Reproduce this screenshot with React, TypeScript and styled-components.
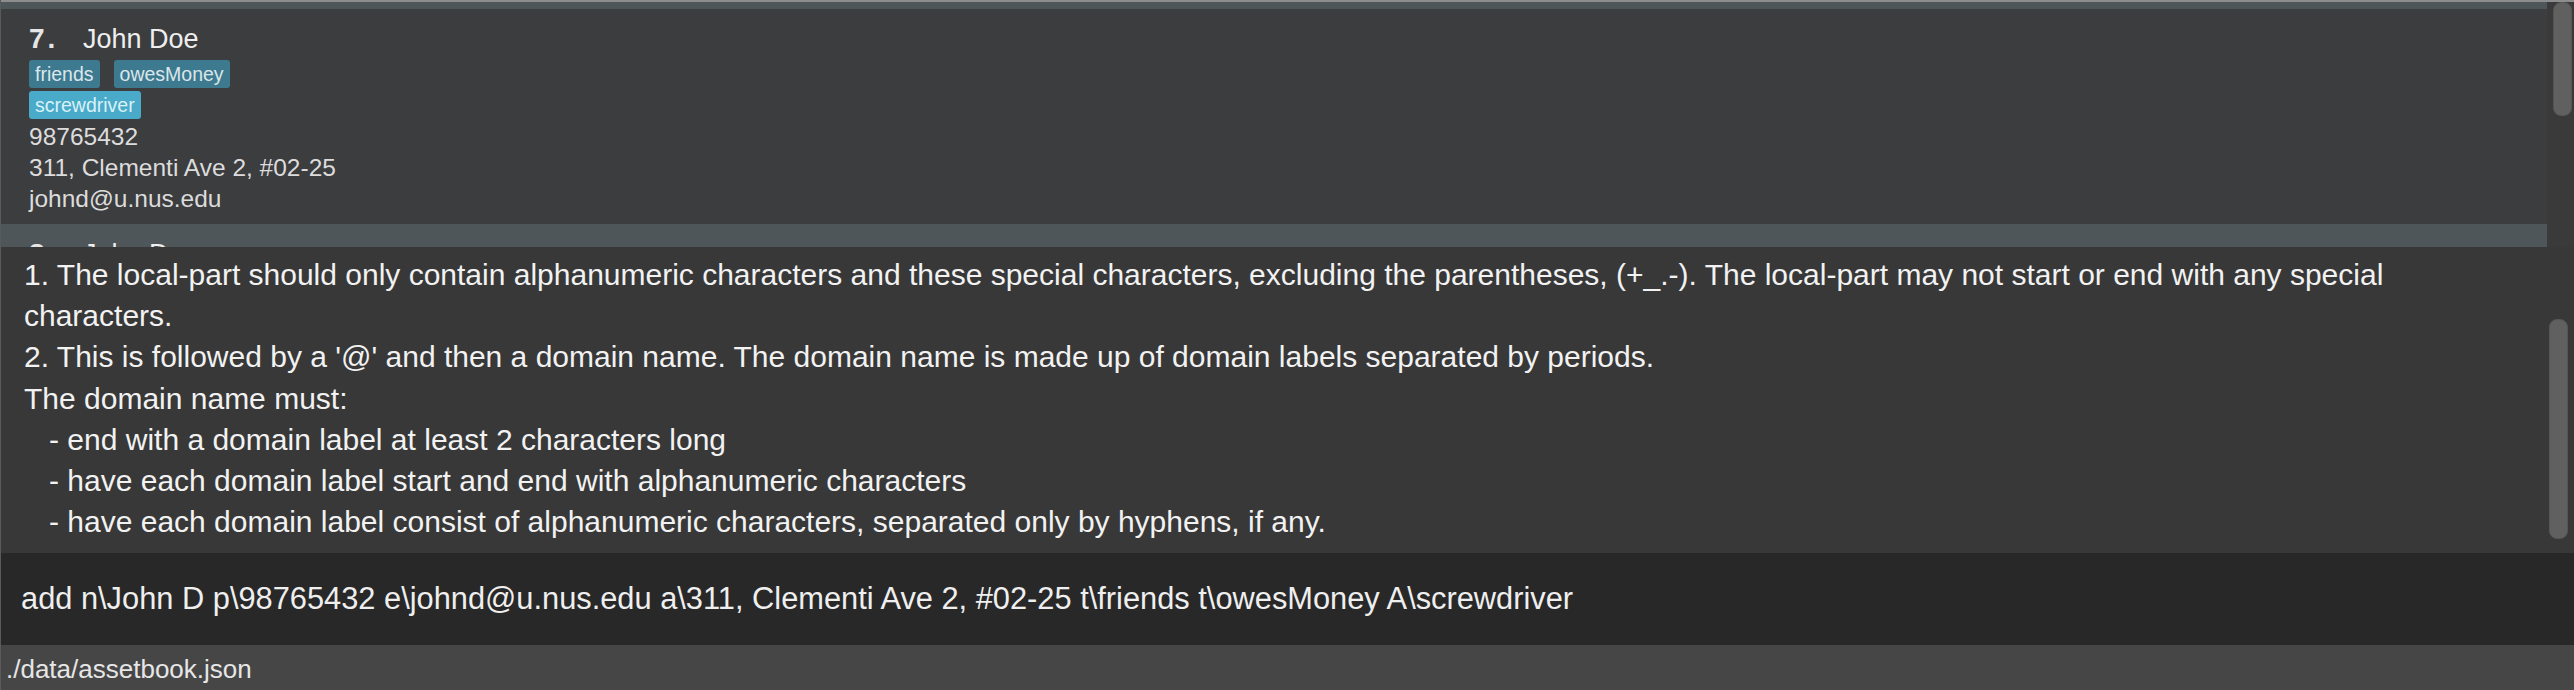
import React, { useLayoutEffect, useRef } from 'react';
import styled, { createGlobalStyle } from 'styled-components';

const GlobalStyle = createGlobalStyle`
  html, body {
    margin: 0;
    padding: 0;
    background: #383838;
  }
  body {
    font-family: "Liberation Sans", Arial, sans-serif;
  }
`;

const Window = styled.div`
  display: flex;
  flex-direction: column;
  width: 100%;
  height: 690px;
  border-left: 1px solid #5a5a5a;
  box-sizing: border-box;
  overflow: hidden;
`;

const ListPanel = styled.div`
  display: flex;
  height: 247px;
  border-top: 2px solid #8d8d8d;
  background: #3a3a3a;
  box-sizing: border-box;
`;

const ListViewport = styled.div`
  flex: 1;
  overflow: hidden;
`;

const Card = styled.div<{ odd: boolean }>`
  padding: 14px 0 10px 28px;
  background: ${p => (p.odd ? '#3c3d3f' : '#4f5659')};
  color: #dedede;
`;

const NameLine = styled.div`
  display: flex;
  align-items: baseline;
  font-size: 27px;
  line-height: 32px;
  color: #eeeeee;
`;

const Index = styled.span`
  display: inline-block;
  width: 54px;
  font-size: 28px;
  font-weight: 700;
  letter-spacing: 3px;
  color: #e6e6e6;
`;

const Tags = styled.div`
  display: flex;
  flex-wrap: wrap;
  max-width: 260px;
  column-gap: 14px;
  row-gap: 3px;
  margin-top: 5px;
  margin-bottom: 2px;
`;

const Tag = styled.span<{ bright?: boolean }>`
  display: inline-block;
  height: 28px;
  line-height: 28px;
  padding: 0 6px;
  border-radius: 3px;
  font-size: 19.5px;
  background: ${p => (p.bright ? '#4aaac9' : '#3d7a90')};
  color: ${p => (p.bright ? '#d9f1f8' : '#dbe6ea')};
`;

const Detail = styled.div`
  font-size: 24.5px;
  line-height: 31px;
  color: #dcdcdc;
`;

const ScrollTrack = styled.div<{ width: number; pad: number }>`
  width: ${p => p.width}px;
  padding: 0 ${p => p.pad}px;
  box-sizing: border-box;
  display: flex;
  justify-content: flex-end;
`;

const Thumb = styled.div<{ top: number; length: number }>`
  width: 19px;
  height: ${p => p.length}px;
  margin-top: ${p => p.top}px;
  border-radius: 8px;
  background: #606060;
  border: 1px solid #555;
  box-sizing: border-box;
`;

const ResultPanel = styled.div`
  display: flex;
  height: 306px;
  background: #383838;
`;

const ResultText = styled.div`
  flex: 1;
  padding: 7px 0 0 23px;
  font-size: 30px;
  line-height: 41.2px;
  color: #f2f2f2;
  white-space: pre;
  overflow: hidden;
`;

const CommandBox = styled.div`
  display: flex;
  align-items: center;
  height: 92px;
  padding-left: 20px;
  background: #282828;
  font-size: 30.8px;
  color: #efefef;
  white-space: pre;
`;

const StatusBar = styled.div`
  display: flex;
  align-items: center;
  flex: 1;
  padding-left: 5px;
  padding-top: 4px;
  background: #464646;
  font-size: 26px;
  color: #e6e6e6;
`;

type Person = {
  name: string;
  tags: { label: string; bright?: boolean }[];
  phone: string;
  address: string;
  email: string;
};

const people: Person[] = [
  {
    name: 'Bernice Yu',
    tags: [{ label: 'colleagues' }, { label: 'friends' }],
    phone: '99272758',
    address: 'Blk 30 Lorong 3 Serangoon Gardens, #07-18',
    email: 'berniceyu@example.com',
  },
  {
    name: 'John Doe',
    tags: [{ label: 'friends' }, { label: 'owesMoney' }, { label: 'screwdriver', bright: true }],
    phone: '98765432',
    address: '311, Clementi Ave 2, #02-25',
    email: 'johnd@u.nus.edu',
  },
  {
    name: 'John D',
    tags: [{ label: 'friends' }, { label: 'owesMoney' }, { label: 'screwdriver', bright: true }],
    phone: '98765432',
    address: '311, Clementi Ave 2, #02-25',
    email: 'johnd@u.nus.edu',
  },
];

const resultLines = [
  '1. The local-part should only contain alphanumeric characters and these special characters, excluding the parentheses, (+_.-). The local-part may not start or end with any special',
  'characters.',
  "2. This is followed by a '@' and then a domain name. The domain name is made up of domain labels separated by periods.",
  'The domain name must:',
  '   - end with a domain label at least 2 characters long',
  '   - have each domain label start and end with alphanumeric characters',
  '   - have each domain label consist of alphanumeric characters, separated only by hyphens, if any.',
];

const App: React.FC = () => {
  const listRef = useRef<HTMLDivElement>(null);
  const firstCardRef = useRef<HTMLDivElement>(null);

  // scroll so only the last 7px of card 6 stays visible
  useLayoutEffect(() => {
    if (listRef.current && firstCardRef.current) {
      listRef.current.scrollTop = firstCardRef.current.offsetHeight - 7;
    }
  }, []);

  return (
    <>
      <GlobalStyle />
      <Window>
        <ListPanel>
          <ListViewport ref={listRef}>
            {people.map((p, i) => (
              <Card key={i} odd={i === 1} ref={i === 0 ? firstCardRef : undefined}>
                <NameLine>
                  <Index>{i + 6}.</Index>
                  <span>{p.name}</span>
                </NameLine>
                <Tags>
                  {p.tags.map(t => (
                    <Tag key={t.label} bright={t.bright}>{t.label}</Tag>
                  ))}
                </Tags>
                <Detail>{p.phone}</Detail>
                <Detail>{p.address}</Detail>
                <Detail>{p.email}</Detail>
              </Card>
            ))}
          </ListViewport>
          <ScrollTrack width={27} pad={2}>
            <Thumb top={0} length={114} />
          </ScrollTrack>
        </ListPanel>
        <ResultPanel>
          <ResultText>
            {resultLines.map((l, i) => (
              <div key={i}>{l}</div>
            ))}
          </ResultText>
          <ScrollTrack width={34} pad={6}>
            <Thumb top={72} length={220} />
          </ScrollTrack>
        </ResultPanel>
        <CommandBox>{'add n\\John D p\\98765432 e\\johnd@u.nus.edu a\\311, Clementi Ave 2, #02-25 t\\friends t\\owesMoney A\\screwdriver'}</CommandBox>
        <StatusBar>./data/assetbook.json</StatusBar>
      </Window>
    </>
  );
};

export default App;
